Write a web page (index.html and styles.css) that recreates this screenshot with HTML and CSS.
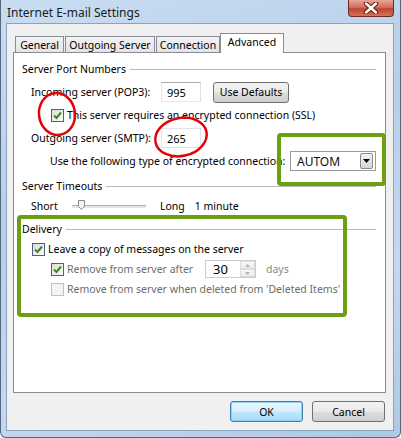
FILE: index.html
```html
<!DOCTYPE html>
<html lang="en">
<head>
    <meta charset="UTF-8">
    <title>Internet E-mail Settings</title>
    <link rel="stylesheet" href="styles.css">
</head>
<body>
<div class="window">
    <div class="titlebar">
        <span class="title">Internet E-mail Settings</span>
        <span class="close">
            <svg width="16" height="12" viewBox="0 0 16 12">
                <path d="M3 1.5 L13 10.5 M13 1.5 L3 10.5" stroke="#5a1a12" stroke-width="4.4" stroke-linecap="round"/>
                <path d="M3 1.5 L13 10.5 M13 1.5 L3 10.5" stroke="#ffffff" stroke-width="2.4" stroke-linecap="round"/>
            </svg>
        </span>
    </div>

    <div class="client">
        <div class="tabs">
            <div class="tab t-general">General</div>
            <div class="tab t-outgoing">Outgoing Server</div>
            <div class="tab t-connection">Connection</div>
            <div class="tab active">Advanced</div>
        </div>

        <div class="panel">
            <div class="group ports">
                <div class="legend">Server Port Numbers</div>
                <div class="row ind1">
                    <span class="label">Incoming server (POP3):</span>
                    <span class="input">995</span>
                    <span class="btn defaults">Use Defaults</span>
                </div>
                <div class="row ind2">
                    <span class="cb"><svg viewBox="0 0 11 11"><path d="M2 5.5 L4.5 8 L9 2.5" fill="none" stroke="#3b8a1e" stroke-width="2"/></svg></span>
                    <span>This server requires an encrypted connection (SSL)</span>
                </div>
                <div class="row ind1">
                    <span class="label">Outgoing server (SMTP):</span>
                    <span class="input pale">265</span>
                </div>
                <div class="row ind3">
                    <span class="enc-label">Use the following type of encrypted connection:</span>
                    <span class="combo">
                        <span class="combo-text">AUTOM</span>
                        <span class="drop"><svg width="7" height="4" viewBox="0 0 7 4"><path d="M0 0 H7 L3.5 4 Z" fill="#000"/></svg></span>
                    </span>
                </div>
            </div>

            <div class="group timeouts">
                <div class="legend">Server Timeouts</div>
                <div class="row ind1">
                    <span class="short">Short</span>
                    <span class="slider">
                        <span class="track"></span>
                        <svg class="thumb" width="7" height="10" viewBox="0 0 7 10"><path d="M0.5 0.5 H6.5 V6.5 L3.5 9.5 L0.5 6.5 Z" fill="#f4f4f4" stroke="#8a8a8a"/></svg>
                    </span>
                    <span class="long">Long</span>
                    <span>1 minute</span>
                </div>
            </div>

            <div class="group delivery">
                <div class="legend">Delivery</div>
                <div class="row ind-leave">
                    <span class="cb"><svg viewBox="0 0 11 11"><path d="M2 5.5 L4.5 8 L9 2.5" fill="none" stroke="#3b8a1e" stroke-width="2"/></svg></span>
                    <span>Leave a copy of messages on the server</span>
                </div>
                <div class="row ind2 grey">
                    <span class="cb"><svg viewBox="0 0 11 11"><path d="M2 5.5 L4.5 8 L9 2.5" fill="none" stroke="#3b8a1e" stroke-width="2"/></svg></span>
                    <span class="after-label">Remove from server after</span>
                    <span class="spin">
                        <span class="spin-val">30</span>
                        <span class="spin-btns">
                            <span class="spin-up"><svg width="5" height="3" viewBox="0 0 5 3"><path d="M0 3 L2.5 0 L5 3 Z" fill="#b5b5b5"/></svg></span>
                            <span class="spin-down"><svg width="5" height="3" viewBox="0 0 5 3"><path d="M0 0 H5 L2.5 3 Z" fill="#b5b5b5"/></svg></span>
                        </span>
                    </span>
                    <span class="days">days</span>
                </div>
                <div class="row ind2 grey">
                    <span class="cb off"></span>
                    <span>Remove from server when deleted from 'Deleted Items'</span>
                </div>
            </div>
        </div>

        <div class="actions">
            <span class="btn ok">OK</span>
            <span class="btn">Cancel</span>
        </div>
    </div>

    <!-- marker rings and boxes drawn on top of the dialog -->
    <svg class="marks" width="401" height="438" viewBox="0 0 401 438">
        <ellipse cx="57" cy="114" rx="18" ry="21" transform="rotate(-8 57 114)" fill="none" stroke="#e6000a" stroke-width="2.5"/>
        <ellipse cx="181" cy="137" rx="26" ry="19" transform="rotate(-12 181 137)" fill="none" stroke="#e6000a" stroke-width="2.5"/>
        <rect x="279" y="135" width="105" height="49" rx="2" fill="none" stroke="#6c9e14" stroke-width="4"/>
        <rect x="19" y="217" width="326" height="98" rx="2" fill="none" stroke="#6c9e14" stroke-width="4"/>
    </svg>
</div>
</body>
</html>
```

FILE: styles.css
```css
body {
    margin: 0;
    font-family: "Noto Sans", "Segoe UI", sans-serif;
    font-size: 10.5px;
    color: #000;
}

.window {
    position: relative;
    width: 401px;
    height: 438px;
    box-sizing: border-box;
    display: flex;
    flex-direction: column;
    background: linear-gradient(160deg, #c9ddf2 0%, #b7cfea 40%, #c4d9ef 70%, #aec8e5 100%);
    border: 1px solid #56687e;
    border-top: none;
    border-radius: 0 0 6px 6px;
}

.titlebar {
    height: 23px;
    display: flex;
    align-items: flex-start;
}

.title {
    margin: 4px 0 0 6px;
    font-size: 12px;
    color: #1a1a1a;
}

.close {
    margin-left: auto;
    margin-right: 6px;
    width: 46px;
    height: 17px;
    box-sizing: border-box;
    border: 1px solid #6e2a22;
    border-top: none;
    border-radius: 0 0 4px 4px;
    background: linear-gradient(to bottom, #e7a898 0%, #d0705e 45%, #c2432f 55%, #d4735c 100%);
    display: flex;
    align-items: center;
    justify-content: center;
}

.client {
    flex: none;
    height: 408px;
    margin: 0 6px 0 5px;
    box-sizing: border-box;
    border: 1px solid #8da3bd;
    background: #f0f0f0;
    padding: 9px 7px 0 6px;
    display: flex;
    flex-direction: column;
}

/* tab strip */
.tabs {
    height: 20px;
    display: flex;
    align-items: flex-end;
    padding-left: 2px;
    position: relative;
    z-index: 1;
}

.tab {
    height: 16px;
    margin-bottom: 1px;
    margin-right: 1px;
    box-sizing: border-box;
    border: 1px solid #898c95;
    border-bottom: none;
    background: linear-gradient(to bottom, #f3f3f3, #e4e4e4);
    display: flex;
    align-items: center;
    justify-content: center;
}

.t-general { width: 49px; }
.t-outgoing { width: 90px; }
.t-connection { width: 64px; }

.tab.active {
    width: 64px;
    height: 20px;
    margin-bottom: 0;
    margin-left: -1px;
    background: #fff;
    padding-bottom: 3px;
}

.panel {
    flex: none;
    height: 341px;
    margin-top: -1px;
    box-sizing: border-box;
    border: 1px solid #898c95;
    background: #fff;
    padding: 6px 9px 0 8px;
}

/* group boxes */
.group {
    display: flex;
    flex-direction: column;
}

.ports { gap: 3px; }
.timeouts { margin-top: 5px; }
.delivery { margin-top: 3px; }

.legend {
    height: 20px;
    display: flex;
    align-items: center;
    gap: 4px;
}

.legend::after {
    content: "";
    flex: 1;
    border-top: 1px solid #b8b8b8;
}

.row {
    height: 20px;
    display: flex;
    align-items: center;
    white-space: nowrap;
}

.ind1 { padding-left: 9px; }
.ind2 { padding-left: 29px; }
.ind3 { padding-left: 28px; }
.ind-leave { padding-left: 10px; }

.grey { color: #6d6d6d; }

.label { width: 130px; }

.input {
    width: 40px;
    height: 20px;
    box-sizing: border-box;
    border: 1px solid;
    border-color: #abadb3 #dbdfe6 #e3e9ef #e2e3ea;
    padding-left: 5px;
    display: flex;
    align-items: center;
    font-size: 11px;
}

.input.pale {
    border-color: #e2e3ea;
}

.btn {
    height: 21px;
    box-sizing: border-box;
    border: 1px solid #707070;
    border-radius: 3px;
    background: linear-gradient(to bottom, #f2f2f2 0%, #ebebeb 45%, #dddddd 55%, #cfcfcf 100%);
    display: flex;
    align-items: center;
    justify-content: center;
    width: 73px;
}

.defaults {
    width: 76px;
    margin-left: 12px;
}

.cb {
    width: 13px;
    height: 13px;
    box-sizing: border-box;
    border: 1px solid #50617a;
    background: linear-gradient(135deg, #dcdcdc, #fbfbfb);
    margin-right: 3px;
    display: flex;
}

.cb svg {
    width: 11px;
    height: 11px;
}

.cb.off {
    border-color: #c0c0c0;
    background: #f4f4f4;
}

.enc-label {
    width: 240px;
    overflow: hidden;
}

.combo {
    margin-left: auto;
    width: 86px;
    height: 20px;
    box-sizing: border-box;
    border: 1px solid #9a9a9a;
    display: flex;
    align-items: center;
    padding: 0 2px 0 6px;
}

.combo-text {
    font-size: 12px;
    color: #111;
}

.drop {
    margin-left: auto;
    width: 13px;
    height: 16px;
    box-sizing: border-box;
    border: 1px solid #8a8a8a;
    border-radius: 2px;
    background: linear-gradient(to bottom, #f4f4f4, #d6d6d6);
    display: flex;
    align-items: center;
    justify-content: center;
}

/* timeout slider */
.short { width: 41px; }

.slider {
    position: relative;
    width: 74px;
    height: 12px;
    display: flex;
    align-items: center;
}

.track {
    flex: 1;
    height: 3px;
    box-sizing: border-box;
    border-top: 1px solid #b0b0b0;
    background: #e6e6e6;
}

.thumb {
    position: absolute;
    left: 6px;
    top: 0;
}

.long {
    margin: 0 10px 0 14px;
}

.after-label { width: 138px; }

.spin {
    width: 51px;
    height: 18px;
    box-sizing: border-box;
    border: 1px solid #c9ccd3;
    display: flex;
    color: #000;
}

.spin-val {
    flex: 1;
    padding-left: 7px;
    font-size: 13px;
    display: flex;
    align-items: center;
}

.spin-btns {
    width: 15px;
    display: flex;
    flex-direction: column;
}

.spin-up,
.spin-down {
    flex: 1;
    border: 1px solid #dcdcdc;
    background: linear-gradient(to bottom, #f8f8f8, #ececec);
    display: flex;
    align-items: center;
    justify-content: center;
}

.days {
    margin-left: 10px;
    color: #8a8a8a;
}

.actions {
    margin-top: 8px;
    display: flex;
    justify-content: flex-end;
    gap: 9px;
    padding-right: 1px;
}

.btn.ok {
    border-color: #3c7fb1;
    background: linear-gradient(to bottom, #eaf6fd 0%, #d9f0fc 45%, #bee6fd 55%, #a7d9f5 100%);
    box-shadow: inset 0 0 0 1px #8fd1f3;
}

.marks {
    position: absolute;
    left: -1px;
    top: 0;
    pointer-events: none;
}
```
